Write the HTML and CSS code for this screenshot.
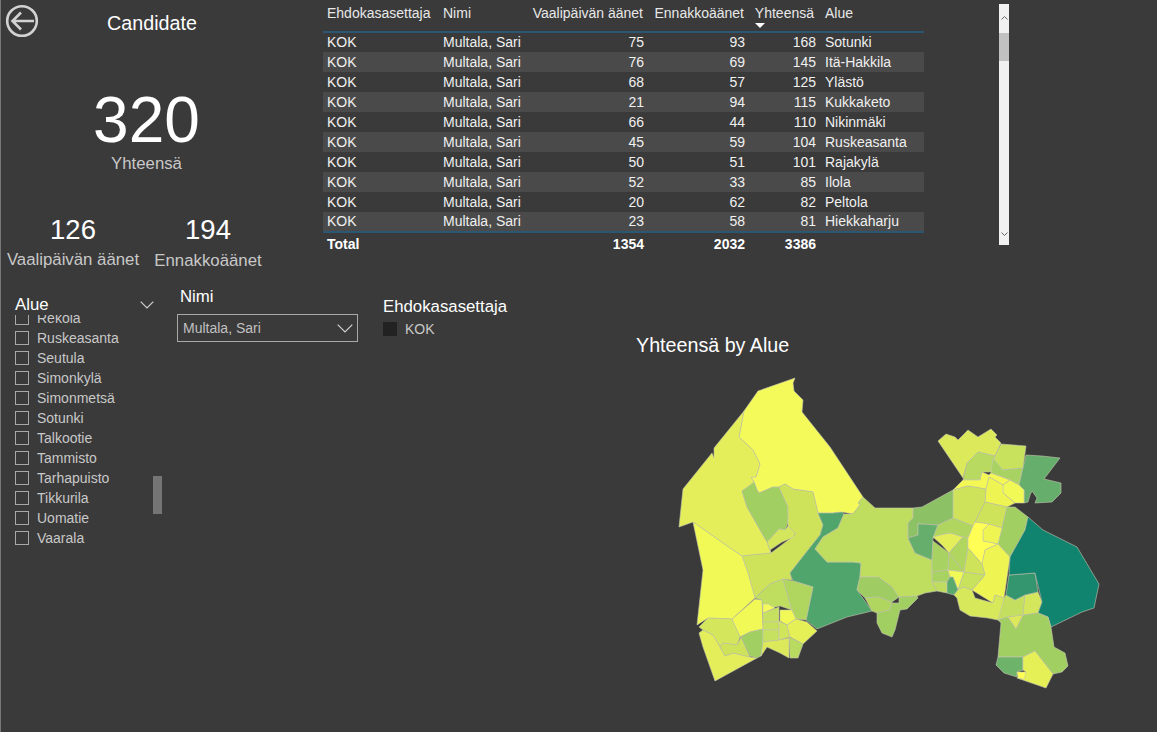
FILE: index.html
```html
<!DOCTYPE html>
<html lang="fi">
<head>
<meta charset="utf-8">
<title>Candidate</title>
<link rel="stylesheet" href="styles.css">
</head>
<body>
<div class="page">
  <section class="top">
    <div class="kpis">
      <div class="head">
        <svg class="back" viewBox="0 0 34 34" width="34" height="34"><circle cx="17" cy="17" r="14.8"/><path d="M29 17H8M16 8.500 7.500 17l8.500 8.500"/></svg>
        <h1 class="title">Candidate</h1>
      </div>
      <div class="hero">
        <div class="hero-num">320</div>
        <div class="label">Yhteensä</div>
      </div>
      <div class="pair">
        <div class="pair-a"><div class="small-num">126</div><div class="label">Vaalipäivän äänet</div></div>
        <div class="pair-b"><div class="small-num">194</div><div class="label">Ennakkoäänet</div></div>
      </div>
    </div>
    <div class="table-wrap">
      <table class="grid">
        <colgroup><col class="c1"><col class="c2"><col class="c3"><col class="c4"><col class="c5"><col class="c6"></colgroup>
        <thead>
          <tr><th>Ehdokasasettaja</th><th>Nimi</th><th class="r">Vaalipäivän äänet</th><th class="r">Ennakkoäänet</th><th class="r sorted">Yhteensä</th><th>Alue</th></tr>
        </thead>
        <tbody>
          <tr><td>KOK</td><td>Multala, Sari</td><td class="r">75</td><td class="r">93</td><td class="r">168</td><td>Sotunki</td></tr>
          <tr><td>KOK</td><td>Multala, Sari</td><td class="r">76</td><td class="r">69</td><td class="r">145</td><td>Itä-Hakkila</td></tr>
          <tr><td>KOK</td><td>Multala, Sari</td><td class="r">68</td><td class="r">57</td><td class="r">125</td><td>Ylästö</td></tr>
          <tr><td>KOK</td><td>Multala, Sari</td><td class="r">21</td><td class="r">94</td><td class="r">115</td><td>Kukkaketo</td></tr>
          <tr><td>KOK</td><td>Multala, Sari</td><td class="r">66</td><td class="r">44</td><td class="r">110</td><td>Nikinmäki</td></tr>
          <tr><td>KOK</td><td>Multala, Sari</td><td class="r">45</td><td class="r">59</td><td class="r">104</td><td>Ruskeasanta</td></tr>
          <tr><td>KOK</td><td>Multala, Sari</td><td class="r">50</td><td class="r">51</td><td class="r">101</td><td>Rajakylä</td></tr>
          <tr><td>KOK</td><td>Multala, Sari</td><td class="r">52</td><td class="r">33</td><td class="r">85</td><td>Ilola</td></tr>
          <tr><td>KOK</td><td>Multala, Sari</td><td class="r">20</td><td class="r">62</td><td class="r">82</td><td>Peltola</td></tr>
          <tr><td>KOK</td><td>Multala, Sari</td><td class="r">23</td><td class="r">58</td><td class="r">81</td><td>Hiekkaharju</td></tr>
        </tbody>
        <tfoot>
          <tr><td>Total</td><td></td><td class="r">1354</td><td class="r">2032</td><td class="r">3386</td><td></td></tr>
        </tfoot>
      </table>
      <div class="scrollbar">
        <svg class="sb-arrow" viewBox="0 0 9 9" width="9" height="9"><path d="M1.500 5.500 4.500 2.500l3 3"/></svg>
        <div class="sb-thumb"></div>
        <svg class="sb-arrow sb-end" viewBox="0 0 9 9" width="9" height="9"><path d="M1.500 3.500 4.500 6.500l3-3"/></svg>
      </div>
    </div>
  </section>
  <section class="bottom">
    <div class="slicer-alue">
      <div class="slicer-head">
        <span>Alue</span>
        <svg class="chev" viewBox="0 0 14 8" width="14" height="8"><path d="M.7.700 7 7l6.300-6.300"/></svg>
      </div>
      <div class="list-box">
        <ul class="list">
          <li><i class="cb"></i>Rekola</li>
          <li><i class="cb"></i>Ruskeasanta</li>
          <li><i class="cb"></i>Seutula</li>
          <li><i class="cb"></i>Simonkylä</li>
          <li><i class="cb"></i>Simonmetsä</li>
          <li><i class="cb"></i>Sotunki</li>
          <li><i class="cb"></i>Talkootie</li>
          <li><i class="cb"></i>Tammisto</li>
          <li><i class="cb"></i>Tarhapuisto</li>
          <li><i class="cb"></i>Tikkurila</li>
          <li><i class="cb"></i>Uomatie</li>
          <li><i class="cb"></i>Vaarala</li>
        </ul>
        <div class="list-thumb"></div>
      </div>
    </div>
    <div class="slicer-nimi">
      <div class="slicer-title">Nimi</div>
      <div class="dropdown">
        <span>Multala, Sari</span>
        <svg class="chev chev-lg" viewBox="0 0 16 9" width="16" height="9"><path d="M.7.700 8 8l7.300-7.300"/></svg>
      </div>
    </div>
    <div class="slicer-party">
      <div class="slicer-title">Ehdokasasettaja</div>
      <div class="legend"><i class="swatch"></i>KOK</div>
    </div>
    <div class="chart">
      <h2 class="chart-title">Yhteensä by Alue</h2>
      <svg class="map" viewBox="660 370 450 330" width="450" height="330">
        <polygon fill="#f3fa5a" points="795,378 758,391 744,411 739,437 753,450 760,464 756,477 751,477 754,482 757,490 759,493 773,487 779,487 785,484 793,489 813,492 818,513 833,513 842,512 853,514 860,505 858,503 863,497 830,447 802,412 803,400 794,391 793,383"/>
        <polygon fill="#e4ee5a" points="744,411 714,448 714,458 712,453 683,489 679,527 693,522 733,550 742,556 771,553 767,542 747,507 742,491 751,485 754,482 751,477 756,477 760,464 753,450 739,437"/>
        <polygon fill="#a2cf62" points="742,491 750,485 754,482 757,490 759,493 773,487 779,487 788,507 788,523 785,530 779,529 767,542 747,507"/>
        <polygon fill="#cfe35a" points="779,487 785,484 793,489 813,492 818,513 823,525 820,535 808,550 790,573 792,580 783,579 770,584 755,598 748,573 742,556 771,553 795,535 795,533 788,526 788,507"/>
        <polygon fill="#d4e65c" points="767,542 779,529 785,530 788,526 795,533 794,537 782,542 770,550 771,553"/>
        <polygon fill="#4fa56c" points="818,513 833,513 842,512 844,514 838,528 823,537 815,549 827,562 853,562 861,563 860,577 857,590 872,611 847,617 817,629 806,620 813,587 793,581 790,573 808,550 820,535 823,525"/>
        <polygon fill="#f0f955" points="693,522 733,550 742,556 748,573 755,598 732,619 708,618 697,625 703,570"/>
        <polygon fill="#f0f955" points="732,619 755,599 762,600 763,629 750,632 740,637 733,622"/>
        <polygon fill="#d4e65c" points="699,627 708,618 732,619 740,637 737,645 723,643 720,647 713,635 703,630"/>
        <polygon fill="#e4ee5a" points="699,633 703,630 713,635 720,647 725,656 733,653 750,657 757,658 715,681 703,647"/>
        <polygon fill="#cfe35a" points="720,647 723,643 737,645 741,637 750,657 733,653 725,656"/>
        <polygon fill="#a2cf62" points="741,637 750,632 763,629 763,643 761,656 757,658 750,656"/>
        <polygon fill="#bfdd5f" points="755,598 762,600 763,613 775,607 780,606 792,610 783,579 770,584"/>
        <polygon fill="#b0d660" points="783,579 793,581 813,587 806,620 796,619 792,610"/>
        <polygon fill="#f3fa5a" points="763,604 768,604 775,608 763,613"/>
        <polygon fill="#f0f955" points="780,610 792,610 796,619 787,625 780,621"/>
        <polygon fill="#c6e05f" points="763,613 779,607 779,622 763,622"/>
        <polygon fill="#c6e05f" points="763,622 779,622 779,630 763,630"/>
        <polygon fill="#c6e05f" points="763,630 779,630 779,640 763,642"/>
        <polygon fill="#d0e55c" points="779,621 787,625 790,637 779,640"/>
        <polygon fill="#e4f055" points="787,625 796,619 807,622 817,631 803,644 790,637"/>
        <polygon fill="#b8da60" points="789,637 803,644 798,658 790,658"/>
        <polygon fill="#dce95a" points="763,642 779,640 789,638 789,658 780,653 767,647 761,656"/>
        <polygon fill="#bfdd5f" points="863,497 875,508 913,508 913,518 908,523 908,538 915,553 932,560 932,572 932,582 937,591 925,593 917,596 899,597 895,593 892,587 878,577 860,577 861,563 853,562 827,562 815,549 823,537 838,528 844,514 853,514 860,505 858,503"/>
        <polygon fill="#9fcd63" points="860,577 878,577 892,587 899,597 892,602 878,597 865,598 857,590"/>
        <polygon fill="#b0d660" points="865,598 878,597 892,602 890,610 877,613 872,611"/>
        <polygon fill="#a2cf62" points="877,613 890,610 892,603 899,603 899,597 917,596 918,598 907,609 900,610 895,630 892,637 882,633 877,623"/>
        <polygon fill="#dce95a" points="938,441 946,434 955,437 958,440 968,430 978,437 991,429 997,435 995,437 1001,443 995,456 978,452 967,463 963,478"/>
        <polygon fill="#b8da60" points="978,452 995,456 992,472 982,472 980,480 963,480 967,463"/>
        <polygon fill="#c8e25e" points="1001,444 1026,446 1023,468 1003,470 993,463 995,456"/>
        <polygon fill="#a8d362" points="993,458 1003,470 1023,468 1019,485 1010,480 991,473"/>
        <polygon fill="#66ae6b" points="1026,455 1042,456 1060,458 1044,479 1061,483 1061,493 1052,502 1035,503 1037,498 1032,491 1030,495 1028,502 1024,503 1024,490 1019,485 1023,468"/>
        <polygon fill="#f3f855" points="954,489 963,480 980,480 982,472 989,475 991,473 1010,480 1003,485 989,477 986,489 968,486 953,490"/>
        <polygon fill="#f0f955" points="1003,485 1010,480 1019,485 1024,490 1024,503 1015,503 1003,493"/>
        <polygon fill="#eef552" points="989,477 1003,485 1003,493 1015,503 1007,507 985,502 986,489"/>
        <polygon fill="#cfe35a" points="953,490 968,486 986,489 985,502 975,522 973,526 953,518"/>
        <polygon fill="#8cc265" points="922,507 953,490 953,518 938,525 918,524 918,535 908,538 908,523 913,518 913,508"/>
        <polygon fill="#66ae6b" points="918,524 938,525 933,538 932,560 915,553 908,538 918,535"/>
        <polygon fill="#b0d660" points="938,525 953,518 973,526 968,538 963,537 950,533 940,535 933,538"/>
        <polygon fill="#e4ee5a" points="933,537 940,535 950,533 963,537 949,553 942,545"/>
        <polygon fill="#a8d362" points="933,541 949,553 948,570 932,572 932,560"/>
        <polygon fill="#b0d660" points="949,553 963,537 968,538 968,548 964,572"/>
        <polygon fill="#b0d660" points="949,553 964,572 948,570"/>
        <polygon fill="#cfe35a" points="985,502 1007,507 1002,528 989,524 975,522"/>
        <polygon fill="#a2cf62" points="1007,507 1015,507 1028,517 1025,530 1010,557 998,544 1002,528"/>
        <polygon fill="#eef552" points="989,524 1002,528 998,544 983,541 983,530"/>
        <polygon fill="#ffff55" points="975,522 989,524 983,530 983,541 998,544 985,550 982,564 968,548 968,538 973,526"/>
        <polygon fill="#eef552" points="985,550 998,544 1010,557 1004,598 995,595 993,603 972,590 985,575 982,564"/>
        <polygon fill="#cfe35a" points="968,548 982,564 985,575 964,572"/>
        <polygon fill="#a8d362" points="932,572 948,570 950,577 947,582 932,582"/>
        <polygon fill="#c0dd5f" points="932,582 947,582 947,593 937,591"/>
        <polygon fill="#f0f955" points="948,570 964,572 958,590 953,577 950,577"/>
        <polygon fill="#5aa96c" points="950,577 953,577 958,590 954,595 947,593 947,582"/>
        <polygon fill="#c8e25e" points="964,572 985,575 972,590 963,587 958,590"/>
        <polygon fill="#d8e85b" points="958,590 963,587 972,590 975,598 993,603 995,595 1004,598 1002,615 998,620 988,618 970,616 960,610 957,598 954,595"/>
        <polygon fill="#c4df5f" points="1006,595 1015,600 1025,595 1023,615 1008,617 998,620 1004,598"/>
        <polygon fill="#d4e65c" points="1025,595 1038,592 1042,602 1038,613 1023,615"/>
        <polygon fill="#34966f" points="1009,575 1035,573 1038,592 1025,595 1015,600 1006,595"/>
        <polygon fill="#11846f" points="1028,517 1043,530 1077,547 1099,584 1094,608 1082,612 1051,627 1048,617 1038,613 1042,602 1035,573 1009,575 1010,557 1025,530"/>
        <polygon fill="#a2cf62" points="998,620 1008,617 1016,629 1023,615 1038,613 1048,617 1051,627 1054,647 1065,653 1068,666 1062,672 1053,674 1035,651 1023,657 1010,657 998,657 1001,623"/>
        <polygon fill="#dce95a" points="1008,617 1023,615 1016,629"/>
        <polygon fill="#6db36a" points="998,657 1023,657 1023,670 1017,672 1017,677 1004,673 996,665"/>
        <polygon fill="#e4f055" points="1023,657 1035,651 1053,674 1046,688 1017,678 1026,672 1023,670"/>
        <polygon fill="#ffff55" points="1017,672 1026,672 1024,679 1018,678"/>
      </svg>
    </div>
  </section>
</div>
</body>
</html>
```

FILE: styles.css
```css
* { box-sizing: border-box; }
html, body { margin: 0; padding: 0; }
body { font-family: "Liberation Sans", Arial, sans-serif; background: #3a3a3a; color: #fff; }
.page { width: 1157px; height: 732px; overflow: hidden; background: #3a3a3a; border-left: 1px solid #777; display: flex; flex-direction: column; }

.top { display: flex; height: 270px; flex: none; }
.kpis { width: 322px; flex: none; }
.head { display: flex; align-items: center; height: 38px; padding-left: 4px; margin-top: 2px; }
.back { flex: none; fill: none; stroke: #d2d2d2; stroke-width: 2.600; }
.title { margin: 4px 0 0; width: 226px; text-align: center; font-size: 19.700px; font-weight: 400; color: #fff; }
.hero { width: 291px; text-align: center; margin-top: 46px; }
.hero-num { font-size: 64px; line-height: 68px; color: #fff; }
.label { font-size: 16.800px; line-height: 20px; color: #c8c8c8; }
.pair { display: flex; margin-top: 39px; }
.pair-a { width: 144px; text-align: center; }
.pair-b { width: 126px; text-align: center; }
.small-num { font-size: 27.500px; line-height: 34px; color: #fff; margin-bottom: 3px; }
.pair-b .small-num { margin-bottom: 4px; }

.table-wrap { display: flex; align-items: flex-start; flex: 1; }
.grid { width: 601px; table-layout: fixed; border-collapse: collapse; font-size: 14px; color: #fff; }
.c1 { width: 116px; } .c2 { width: 89px; } .c3 { width: 120px; } .c4 { width: 101px; } .c5 { width: 71px; } .c6 { width: 104px; }
.grid th { height: 32px; padding: 5px 4px 0; vertical-align: top; text-align: left; font-weight: 400; color: #e8e8e8; border-bottom: 2px solid #2b5674; white-space: nowrap; position: relative; }
.grid th.r { text-align: right; padding-right: 5px; }
.grid th.sorted { padding-right: 6px; }
.grid td { height: 20px; padding: 0 4px 1px; white-space: nowrap; color: #f0f0f0; }
.grid td.r { text-align: right; }
.grid th:last-child, .grid td:last-child { padding-left: 5px; }
.grid tbody tr:nth-child(even) { background: #4a4a4a; }
.grid tfoot td { height: 22px; padding-top: 1px; font-weight: 700; color: #fff; border-top: 2px solid #2b5674; }
.sorted::after { content: ""; position: absolute; left: 6px; top: 23px; border-left: 5px solid transparent; border-right: 5px solid transparent; border-top: 5px solid #fff; }

.scrollbar { width: 10px; height: 241px; margin: 4px 0 0 75px; background: #f1f1f1; display: flex; flex-direction: column; align-items: center; flex: none; }
.sb-arrow { fill: none; stroke: #666; stroke-width: 1; margin-top: 10px; flex: none; }
.sb-thumb { width: 100%; height: 28px; margin-top: 10px; background: #c1c1c1; flex: none; }
.sb-end { margin-top: auto; margin-bottom: 7px; }

.bottom { display: flex; flex: 1; align-items: flex-start; }
.slicer-alue { width: 176px; flex: none; }
.slicer-head { display: flex; justify-content: space-between; align-items: center; width: 139px; margin-left: 14px; margin-top: 26px; height: 18px; font-size: 16.800px; color: #fff; }
.chev { fill: none; stroke: #d0d0d0; stroke-width: 1.200; flex: none; }
.list-box { position: relative; height: 235px; margin-top: 1px; overflow: hidden; }
.list { list-style: none; margin: -7px 0 0; padding: 0 0 0 14px; }
.list li { display: flex; align-items: center; height: 20px; font-size: 14px; color: #c8c8c8; }
.cb { width: 14px; height: 14px; border: 1px solid #a8a8a8; margin-right: 8px; flex: none; }
.list-thumb { position: absolute; left: 152px; top: 161px; width: 9px; height: 38px; background: #757575; }

.slicer-nimi { width: 206px; flex: none; }
.slicer-nimi .slicer-title { margin: 18px 0 0 3px; }
.slicer-title { font-size: 16.800px; line-height: 18px; color: #fff; }
.dropdown { display: flex; justify-content: space-between; align-items: center; width: 181px; height: 28px; margin-top: 8px; padding: 0 4px 0 5px; border: 1px solid #a8a8a8; font-size: 14px; color: #c0c0c0; }
.slicer-party { width: 253px; flex: none; padding-top: 28px; }
.legend { display: flex; align-items: center; margin-top: 5px; font-size: 14px; color: #c8c8c8; }
.swatch { width: 14px; height: 14px; background: #222; margin-right: 8px; flex: none; }

.chart { flex: 1; }
.chart-title { margin: 65px 0 0 0; font-size: 19.700px; line-height: 20px; font-weight: 400; color: #fff; }
.map { display: block; margin: 15px 0 0 24px; }
.map polygon { stroke: #c6c8b0; stroke-width: .6; stroke-linejoin: round; }
```
